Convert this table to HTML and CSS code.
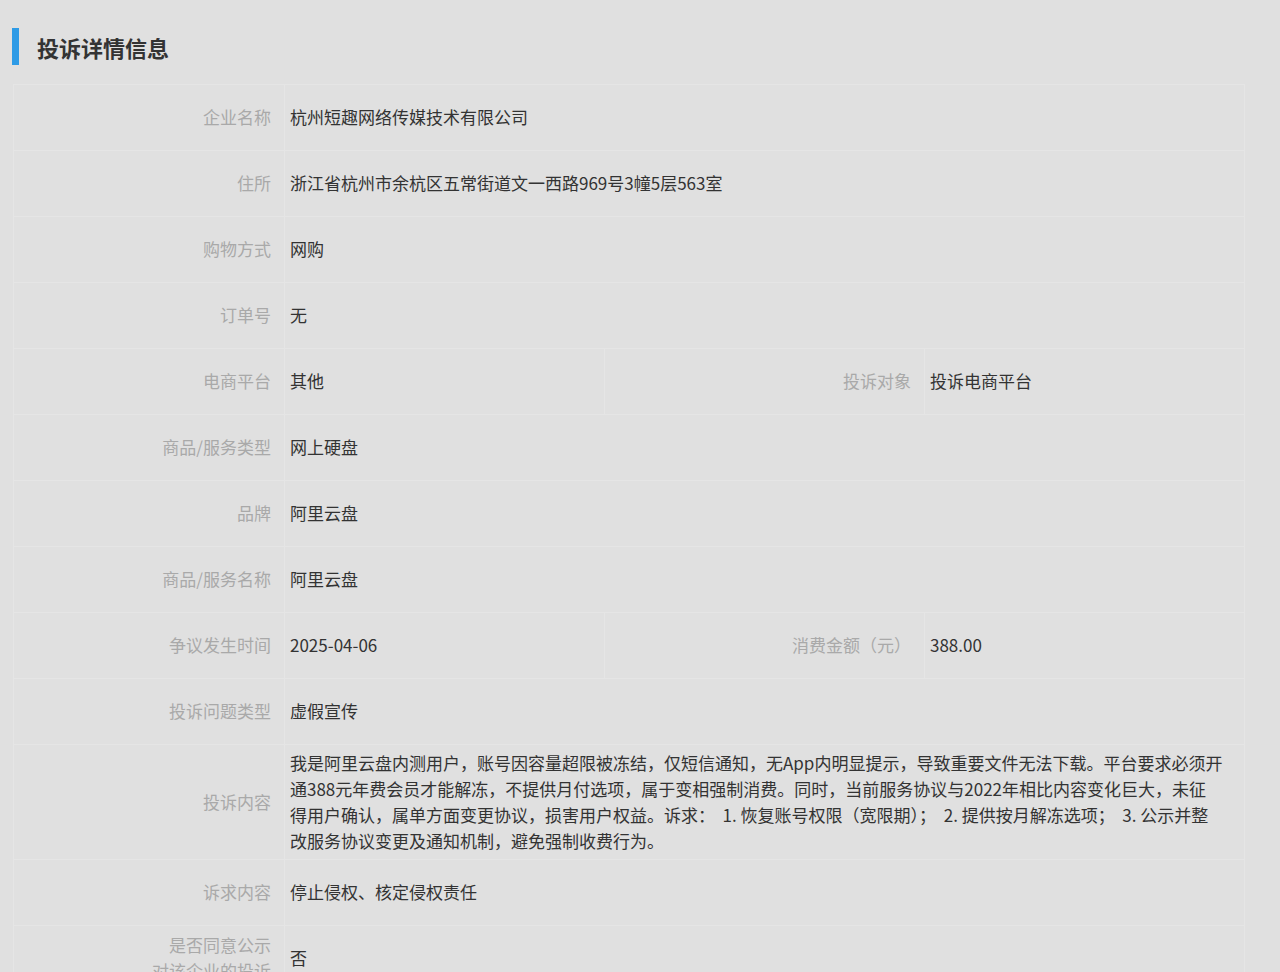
FILE: index.html
```html
<!DOCTYPE html>
<html lang="zh-CN">
<head>
<meta charset="utf-8">
<title>投诉详情信息</title>
<link rel="stylesheet" href="styles.css">
</head>
<body>
<div class="page">
  <div class="section-head">
    <span class="bar"></span>
    <h2 class="title">投诉详情信息</h2>
  </div>
  <table class="detail">
    <colgroup>
      <col class="c-label"><col class="c-val"><col class="c-label2"><col class="c-val">
    </colgroup>
    <tr><td class="lbl">企业名称</td><td class="val" colspan="3">杭州短趣网络传媒技术有限公司</td></tr>
    <tr><td class="lbl">住所</td><td class="val" colspan="3">浙江省杭州市余杭区五常街道文一西路969号3幢5层563室</td></tr>
    <tr><td class="lbl">购物方式</td><td class="val" colspan="3">网购</td></tr>
    <tr><td class="lbl">订单号</td><td class="val" colspan="3">无</td></tr>
    <tr><td class="lbl">电商平台</td><td class="val">其他</td><td class="lbl">投诉对象</td><td class="val">投诉电商平台</td></tr>
    <tr><td class="lbl">商品/服务类型</td><td class="val" colspan="3">网上硬盘</td></tr>
    <tr><td class="lbl">品牌</td><td class="val" colspan="3">阿里云盘</td></tr>
    <tr><td class="lbl">商品/服务名称</td><td class="val" colspan="3">阿里云盘</td></tr>
    <tr><td class="lbl">争议发生时间</td><td class="val">2025-04-06</td><td class="lbl">消费金额（元）</td><td class="val">388.00</td></tr>
    <tr><td class="lbl">投诉问题类型</td><td class="val" colspan="3">虚假宣传</td></tr>
    <tr class="multi"><td class="lbl">投诉内容</td><td class="val" colspan="3">我是阿里云盘内测用户，账号因容量超限被冻结，仅短信通知，无App内明显提示，导致重要文件无法下载。平台要求必须开<br>通388元年费会员才能解冻，不提供月付选项，属于变相强制消费。同时，当前服务协议与2022年相比内容变化巨大，未征<br>得用户确认，属单方面变更协议，损害用户权益。诉求：&nbsp; 1. 恢复账号权限（宽限期）；&nbsp; 2. 提供按月解冻选项；&nbsp; 3. 公示并整<br>改服务协议变更及通知机制，避免强制收费行为。</td></tr>
    <tr><td class="lbl">诉求内容</td><td class="val" colspan="3">停止侵权、核定侵权责任</td></tr>
    <tr class="two"><td class="lbl">是否同意公示<br>对该企业的投诉</td><td class="val" colspan="3">否</td></tr>
  </table>
</div>
</body>
</html>
```
FILE: styles.css
```css
html, body {
  margin: 0;
  padding: 0;
  background: #e0e0e0;
}
body {
  font-family: "Noto Sans CJK SC", "Noto Sans", sans-serif;
  color: #333;
}
.page {
  padding: 28px 36px 0 12px;
}
.section-head {
  display: flex;
  align-items: center;
  height: 37px;
}
.bar {
  width: 7px;
  height: 37px;
  background: #2e9be6;
  flex: none;
}
.title {
  margin: 0 0 0 18px;
  font-size: 22px;
  font-weight: bold;
  color: #333;
  line-height: 38px;
}
.detail {
  margin: 19px 0 0 1px;
  border-collapse: collapse;
  width: 1231px;
  table-layout: fixed;
  font-size: 17px;
}
.c-label { width: 271px; }
.c-label2 { width: 320px; }
.c-val { width: 320px; }
.detail td {
  border: 1px solid #e5e5e5;
  height: 63px;
  padding: 0 0 2px 0;
  vertical-align: middle;
  line-height: 26px;
}
.detail td.lbl {
  text-align: right;
  color: #a9a9a9;
  padding-right: 13px;
}
.detail td.val {
  color: #333;
  padding-left: 5px;
  padding-right: 4px;
}
.multi td {
  height: auto;
  padding-top: 5px;
  padding-bottom: 5px;
}
.two td {
  height: 64px;
}
```
